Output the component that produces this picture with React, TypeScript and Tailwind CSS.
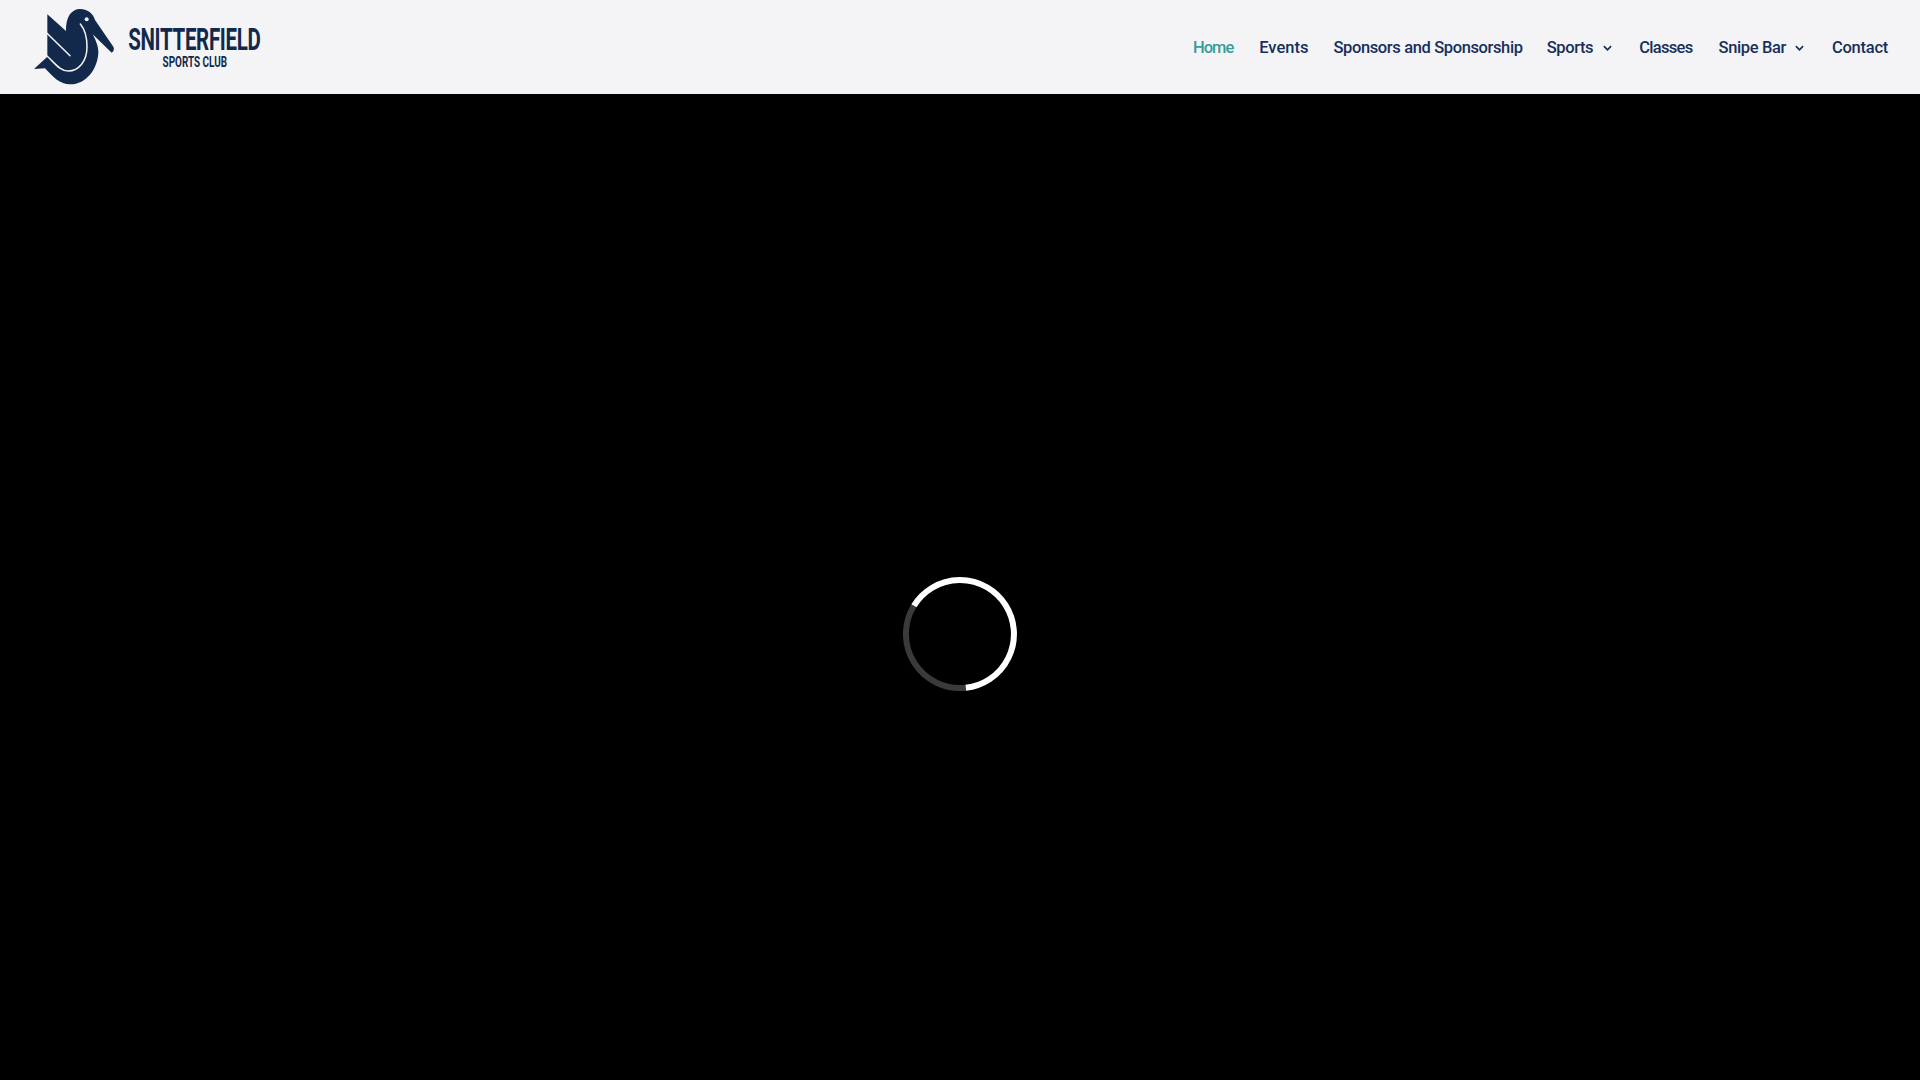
import React from "react";

function Logo() {
  return (
    <svg viewBox="0 0 300 285" className="w-[100px] h-[95px] shrink-0" aria-hidden="true">
      <path
        fill="#12294b"
        d="M67,43 L123,93 C122,50 140,27 165,27 C190,27 205,42 210,60 L265,140 Q270,150 260,158 L203,103 C215,125 221,145 220,158 C218,205 185,253 135,253 C105,253 85,232 60,205 L27,207 L67,170 Z"
      />
      <circle cx="185" cy="58" r="6" fill="#f4f4f7" />
      <path
        fill="none"
        stroke="#f4f4f7"
        strokeWidth="4.5"
        strokeLinecap="round"
        d="M66,100 L135,167 M166,72 C176,84 186,110 186,140 C186,185 160,213 130,213 C105,213 90,190 66,168"
      />
    </svg>
  );
}

function Chevron({ className }: { className: string }) {
  return (
    <svg viewBox="0 0 10 6" className={`w-[9px] h-[6px] ${className}`} fill="none" stroke="currentColor" strokeWidth="1.9" aria-hidden="true">
      <path d="M1,1 L5,5 L9,1" />
    </svg>
  );
}

function Item({ label, className, chevron }: { label: string; className: string; chevron?: string }) {
  return (
    <a className={`flex items-center whitespace-nowrap ${className}`}>
      <span>{label}</span>
      {chevron && <Chevron className={chevron} />}
    </a>
  );
}

export default function App() {
  return (
    <div className="w-[1920px] h-[1080px] overflow-hidden bg-black flex flex-col">
      <header className="h-[94px] shrink-0 bg-[#f4f4f7] flex items-center pl-[25px] pr-[32px]">
        <Logo />
        <div className="ml-[4px] flex flex-col items-center text-[#12294b] font-['Roboto',sans-serif] font-bold leading-none w-[131px]">
          <span className="text-[32px] leading-[26px] tracking-[-0.5px] scale-x-[0.64] whitespace-nowrap">SNITTERFIELD</span>
          <span className="text-[15px] leading-[14px] mt-[3px] scale-x-[0.66] whitespace-nowrap">SPORTS CLUB</span>
        </div>
        <nav className="ml-auto flex items-center text-[16.5px] pt-[2px] font-medium text-[#17305a] tracking-[-0.375px] font-['Roboto','Liberation_Sans',sans-serif]">
          <Item label="Home" className="mr-[26px] text-[#339e9a] tracking-[-1px]" />
          <Item label="Events" className="mr-[25px] tracking-[0px]" />
          <Item label="Sponsors and Sponsorship" className="mr-[24px]" />
          <Item label="Sports" className="mr-[27px]" chevron="ml-[10px]" />
          <Item label="Classes" className="mr-[26px] tracking-[-0.7px]" />
          <Item label="Snipe Bar" className="mr-[28px]" chevron="ml-[9px]" />
          <Item label="Contact" className="tracking-[-0.25px]" />
        </nav>
      </header>
      <main className="flex-1 flex flex-col items-center pt-[483px]">
        <svg viewBox="0 0 114 114" className="w-[114px] h-[114px]" fill="none" strokeWidth="6" aria-label="Loading">
          <path stroke="#3a3a3a" d="M10.9,28.8 A54,54 0 0 0 62.8,110.7" />
          <path stroke="#ffffff" d="M62.8,110.7 A54,54 0 1 0 10.9,28.8" />
        </svg>
      </main>
    </div>
  );
}
